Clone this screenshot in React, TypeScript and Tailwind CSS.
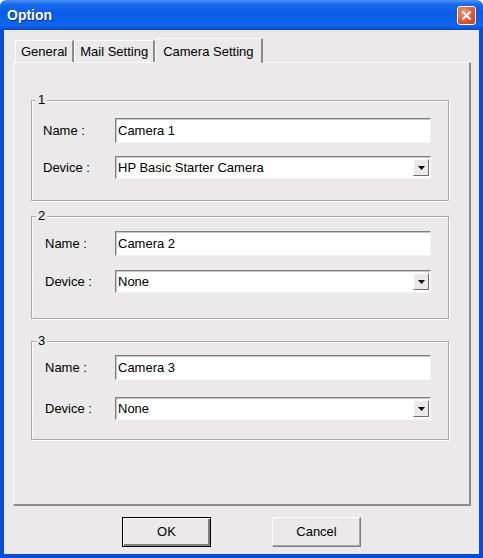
import React from 'react';

type Cam = {
  id: string;
  name: string;
  device: string;
  mt: string;
  pt: string;
  gap: string;
  pb: string;
  pl: string;
  lw: string;
};

const cams: Cam[] = [
  { id: '1', name: 'Camera 1', device: 'HP Basic Starter Camera', mt: 'mt-[37px]', pt: 'pt-[17px]', gap: 'gap-[13px]', pb: 'pb-[21px]', pl: 'pl-[11px]', lw: 'w-[72px]' },
  { id: '2', name: 'Camera 2', device: 'None', mt: 'mt-[15px]', pt: 'pt-[14px]', gap: 'gap-[14px]', pb: 'pb-[25px]', pl: 'pl-[13px]', lw: 'w-[70px]' },
  { id: '3', name: 'Camera 3', device: 'None', mt: 'mt-[22px]', pt: 'pt-[13px]', gap: 'gap-[17px]', pb: 'pb-[19px]', pl: 'pl-[13px]', lw: 'w-[70px]' },
];

const sunken =
  'bg-white border border-t-[#7f7f7f] border-l-[#7f7f7f] border-b-[#f4f4f4] border-r-[#f4f4f4] shadow-[inset_1px_1px_0_#c9c7c4]';

const Tab = ({ label, active }: { label: string; active?: boolean }) => (
  <div
    className={
      active
        ? 'relative z-10 -mb-px h-[25px] px-[7px] pt-[4px] bg-[#ece9eb] border-t border-l border-white border-r-2 border-r-[#8c8c8c] text-[13px] leading-[18px]'
        : 'h-[22px] px-[5px] pt-[2px] bg-[#ece9eb] border-t border-l border-white border-r-2 border-r-[#8c8c8c] text-[13px] leading-[18px]'
    }
  >
    {label}
  </div>
);

const Group = ({ cam }: { cam: Cam }) => (
  <div
    className={`relative ${cam.mt} border border-[#a9a9a9] shadow-[1px_1px_0_#ffffff,inset_1px_1px_0_#ffffff] ${cam.pt} ${cam.pb} ${cam.pl} pr-[17px] flex flex-col ${cam.gap}`}
  >
    <span className="absolute -top-[9px] left-[4px] px-[2px] bg-[#ece9eb] text-[13px] leading-[16px]">
      {cam.id}
    </span>
    <div className="flex items-center">
      <span className={`${cam.lw} text-[13px]`}>Name :</span>
      <div className={`flex-1 h-[25px] ${sunken} px-[2px] flex items-center text-[13px]`}>{cam.name}</div>
    </div>
    <div className="flex items-center">
      <span className={`${cam.lw} text-[13px]`}>Device :</span>
      <div className={`flex-1 h-[23px] ${sunken} pl-[2px] pr-[1px] flex items-center text-[13px]`}>
        <span className="flex-1">{cam.device}</span>
        <div className="w-[16px] h-[17px] bg-[#ece9eb] border border-t-white border-l-white border-b-[#6f6f6f] border-r-[#6f6f6f] flex items-center justify-center">
          <svg width="7" height="4" viewBox="0 0 7 4">
            <path d="M0 0h7L3.5 4z" fill="#000" />
          </svg>
        </div>
      </div>
    </div>
  </div>
);

const Button = ({ label, primary }: { label: string; primary?: boolean }) => (
  <button
    className={`w-[89px] h-[30px] bg-[#ece9eb] text-[13px] flex items-center justify-center ${
      primary
        ? 'border border-black shadow-[inset_1px_1px_0_#ffffff,inset_-2px_-2px_0_#7f7f7f]'
        : 'border border-t-white border-l-white border-b-[#7f7f7f] border-r-[#7f7f7f] shadow-[inset_-1px_-1px_0_#a8a8a8]'
    }`}
  >
    {label}
  </button>
);

export default function App() {
  return (
    <div className="w-[483px] h-[558px] flex flex-col font-['Liberation_Sans',Arial,sans-serif] text-black select-none">
      <div className="h-[30px] flex items-center pl-[7px] pr-[7px] rounded-t-[6px] bg-[linear-gradient(180deg,#4a93f8_0%,#1668ea_15%,#0a5ce6_45%,#0f66ee_85%,#0a47c9_100%)]">
        <span className="flex-1 text-white font-bold text-[14px] [text-shadow:1px_1px_0_#0a2a8a]">Option</span>
        <div className="w-[19px] h-[19px] rounded-[3px] border border-white bg-[radial-gradient(circle_at_35%_30%,#f29a7a_0%,#e2582f_55%,#c23a16_100%)] flex items-center justify-center">
          <svg width="11" height="11" viewBox="0 0 11 11">
            <path d="M1.5 1.5l8 8M9.5 1.5l-8 8" stroke="#fff" strokeWidth="2" />
          </svg>
        </div>
      </div>
      <div className="flex-1 flex flex-col bg-[#ece9eb] border-l-4 border-r-4 border-b-4 border-[#0a4bd6] pl-[9px] pr-[8px] pt-[8px]">
        <div className="flex items-end h-[24px] pl-[2px]">
          <Tab label="General" />
          <Tab label="Mail Setting" />
          <Tab label="Camera Setting" active />
        </div>
        <div className="h-[444px] border-t border-l border-white border-r-2 border-b-2 border-r-[#8c8c8c] border-b-[#8c8c8c] pl-[17px] pr-[20px]">
          {cams.map((c) => (
            <Group key={c.id} cam={c} />
          ))}
        </div>
        <div className="mt-[11px] flex justify-center gap-[61px] pr-[1px]">
          <Button label="OK" primary />
          <Button label="Cancel" />
        </div>
      </div>
    </div>
  );
}
